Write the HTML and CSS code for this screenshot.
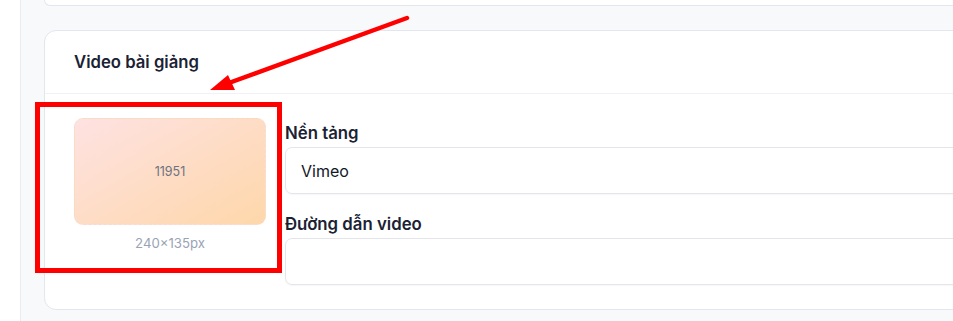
FILE: index.html
```html
<!DOCTYPE html>
<html lang="vi">
<head>
<meta charset="utf-8">
<title>Video bài giảng</title>
<link rel="stylesheet" href="styles.css">
</head>
<body>
<div class="page">
  <div class="main">
    <div class="card-prev"></div>
    <section class="card">
      <header class="card-header">
        <h2 class="card-title">Video bài giảng</h2>
      </header>
      <div class="card-body">
        <div class="thumb-col">
          <div class="thumb">11951</div>
          <div class="thumb-caption">240×135px</div>
        </div>
        <div class="fields">
          <div class="field">
            <label class="field-label">Nền tảng</label>
            <div class="input">Vimeo</div>
          </div>
          <div class="field">
            <label class="field-label">Đường dẫn video</label>
            <div class="input"></div>
          </div>
        </div>
      </div>
    </section>
  </div>
  <svg class="annotation" width="953" height="321" viewBox="0 0 953 321" aria-hidden="true">
    <rect x="37.5" y="104.5" width="242" height="166" fill="none" stroke="#ff0000" stroke-width="5"/>
    <line x1="407" y1="18" x2="226" y2="84" stroke="#ff0000" stroke-width="4.5" stroke-linecap="round"/>
    <polygon points="210,90 228,75 235,90" fill="#ff0000"/>
  </svg>
</div>
</body>
</html>
```

FILE: styles.css
```css
html, body {
  margin: 0;
  padding: 0;
  background: #ffffff;
  overflow: hidden;
  font-family: Inter, "Noto Sans", "Liberation Sans", sans-serif;
}

.page {
  position: relative;
  width: 953px;
  height: 321px;
  overflow: hidden;
}

.main {
  margin-left: 20px;
  height: 321px;
  background: #f8f9fb;
  border-left: 1px solid #e8ebf0;
  padding-left: 23px;
  display: flex;
  flex-direction: column;
  gap: 24px;
}

.card-prev {
  width: 1000px;
  height: 5px;
  background: #ffffff;
  border: 1px solid #e2e6ee;
  border-top: none;
  border-radius: 0 0 12px 12px;
}

.card {
  width: 1000px;
  background: #ffffff;
  border: 1px solid #e2e6ee;
  border-radius: 12px;
  flex-shrink: 0;
}

.card-header {
  height: 62px;
  display: flex;
  align-items: center;
  padding: 0 29px;
  border-bottom: 1px solid #f0f2f5;
}

.card-title {
  margin: 0;
  font-size: 16.7px;
  font-weight: 600;
  color: #1a2234;
}

.card-body {
  display: flex;
  gap: 19px;
  padding: 24px 29px 24px 29px;
}

.thumb-col {
  width: 192px;
  display: flex;
  flex-direction: column;
  align-items: center;
}

.thumb {
  width: 192px;
  height: 107px;
  box-sizing: border-box;
  border-radius: 9px;
  border: 1px dashed #f7dccb;
  background: linear-gradient(150deg, #fee2e2 0%, #fed7aa 100%);
  display: flex;
  align-items: center;
  justify-content: center;
  font-size: 12.5px;
  color: #6b7280;
}

.thumb-caption {
  margin-top: 10px;
  font-size: 13.2px;
  line-height: 16px;
  color: #9aa3b5;
}

.fields {
  flex: 1;
  display: flex;
  flex-direction: column;
  gap: 18px;
  padding-top: 3px;
}

.field {
  display: flex;
  flex-direction: column;
  gap: 2px;
}

.field-label {
  font-size: 16.8px;
  font-weight: 600;
  color: #1a2234;
  line-height: 24px;
}

.input {
  height: 47px;
  box-sizing: border-box;
  border: 1px solid #e3e5e9;
  border-radius: 7px;
  padding: 0 15px;
  display: flex;
  align-items: center;
  font-size: 16px;
  color: #111827;
  box-shadow: 0 1px 2px rgba(0, 0, 0, 0.04);
}

.annotation {
  position: absolute;
  left: 0;
  top: 0;
  pointer-events: none;
}
```
